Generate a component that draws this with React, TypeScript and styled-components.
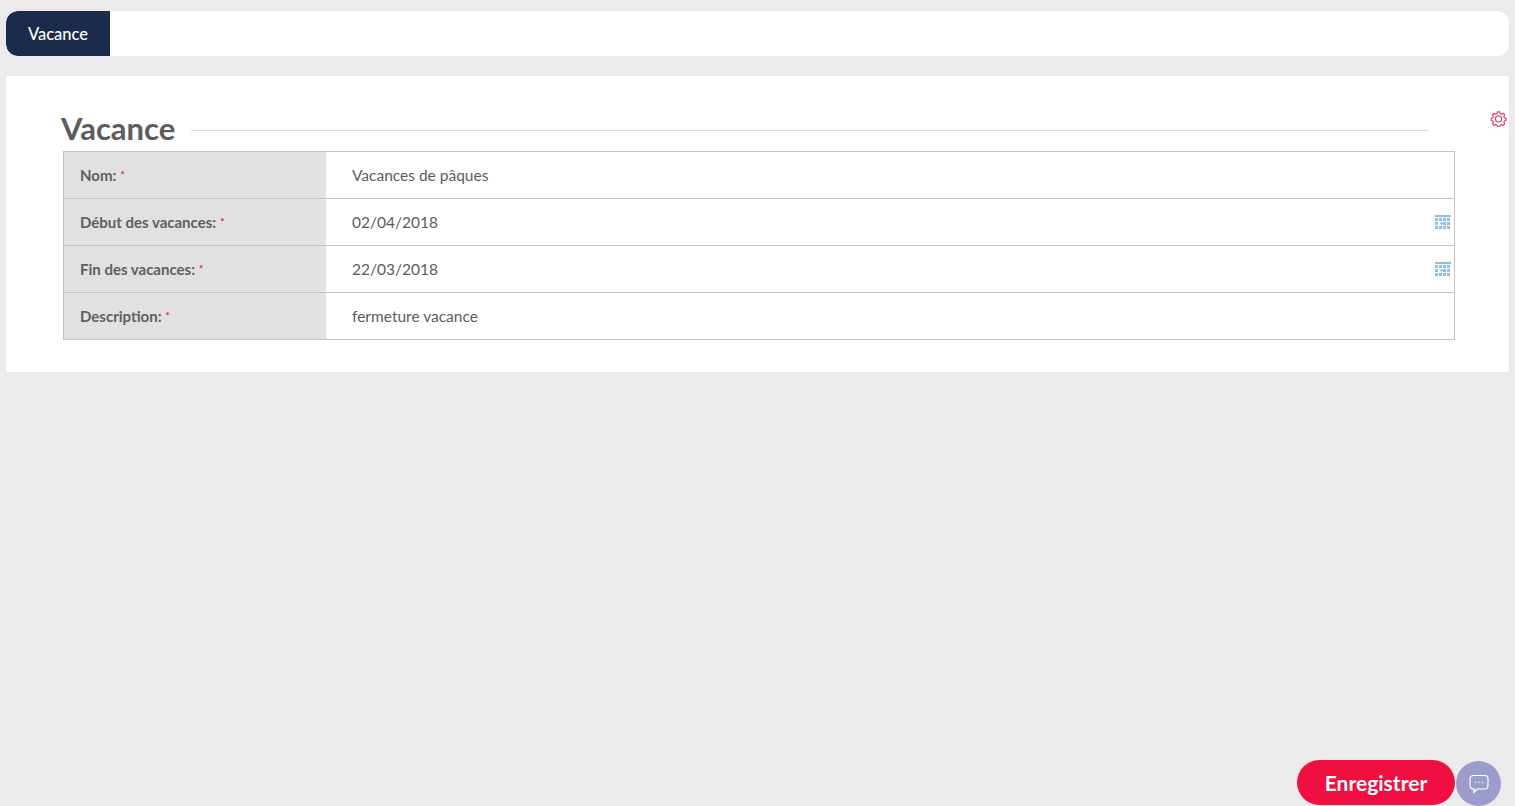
import React from 'react';
import styled, { createGlobalStyle } from 'styled-components';

const GlobalStyle = createGlobalStyle`
	html, body {
		margin: 0;
		padding: 0;
		height: 100%;
		background: #ebebeb;
		font-family: Lato, 'Open Sans', sans-serif;
		color: #5b5b5b;
	}
`;

const Page = styled.div`
	box-sizing: border-box;
	height: 806px;
	padding: 11px 6px 0;
	overflow: hidden;
`;

const TabBar = styled.div`
	display: flex;
	height: 45px;
	background: #fff;
	border-radius: 12px;
	overflow: hidden;
`;

const Tab = styled.div`
	display: flex;
	align-items: center;
	justify-content: center;
	width: 104px;
	background: #1a2b4c;
	color: #fff;
	font-size: 16.5px;
	font-weight: 500;
	border-radius: 12px 0 0 12px;
`;

const Card = styled.section`
	position: relative;
	box-sizing: border-box;
	height: 296px;
	margin-top: 20px;
	padding: 28px 54px 0 57px;
	background: #fff;
`;

const TitleRow = styled.div`
	display: flex;
	align-items: center;
	height: 47px;
	margin-left: -2px;
	padding-right: 27px;
	gap: 16px;
`;

const Title = styled.h2`
	margin: 0;
	font-size: 31px;
	line-height: 40px;
	font-weight: 700;
	color: #5d5d5f;
`;

const TitleLine = styled.div`
	flex: 1;
	height: 1px;
	margin-top: 5px;
	background: #d8d8d8;
`;

const GearButton = styled.div`
	position: absolute;
	top: 34px;
	right: 2px;
	width: 17px;
	height: 17px;
	color: #dc3a62;
`;

const Table = styled.div`
	border: 1px solid #c4c4c4;
	border-bottom-width: 1px;
`;

const Row = styled.div`
	display: grid;
	grid-template-columns: 262px 1fr;
	height: 47px;
	box-sizing: border-box;
	border-top: 1px solid #c4c4c4;

	&:first-child {
		height: 46px;
		border-top: none;
	}
`;

const Label = styled.div`
	display: flex;
	align-items: center;
	padding-left: 16px;
	background: #e1e1e1;
	font-size: 15px;
	font-weight: 700;
	color: #5f5f5f;
`;

const Required = styled.sup`
	margin-left: 4px;
	color: #e8173f;
	font-size: 10px;
	line-height: 0;
	position: relative;
	top: -1px;
`;

const Value = styled.div`
	position: relative;
	display: flex;
	align-items: center;
	padding-left: 26px;
	font-size: 15.5px;
	color: #5c5c5c;
`;

const CalendarButton = styled.svg`
	position: absolute;
	top: 16px;
	right: 3px;
	width: 16px;
	height: 14px;
	fill: #8fc0e4;
`;

const SaveButton = styled.button`
	position: fixed;
	left: 1297px;
	bottom: 1px;
	width: 158px;
	height: 45px;
	border: none;
	border-radius: 23px;
	background: #ef0f41;
	color: #fff;
	font-family: Lato, sans-serif;
	font-size: 21px;
	font-weight: 700;
	padding: 0;
`;

const ChatButton = styled.div`
	position: fixed;
	left: 1456px;
	bottom: 0;
	display: flex;
	align-items: center;
	justify-content: center;
	width: 45px;
	height: 45px;
	border-radius: 50%;
	background: #9c9ccc;
`;

const CalendarIcon = () => (
	<CalendarButton viewBox="0 0 16 14">
		<rect x="0" y="0" width="16" height="2" />
		{[3, 7, 11].map((y) =>
			[0, 4, 8, 12].map((x) =>
				x === 4 && y === 7 ? null : <rect key={`${x}-${y}`} x={x + (x > 0 ? 0 : 0)} y={y} width="3" height="3" />,
			),
		)}
		<path d="M5 8h3v1H5zM6 7h1v3H6z" />
	</CalendarButton>
);

const GearIcon = () => (
	<svg viewBox="0 0 24 24" width="17" height="17" fill="none" stroke="currentColor" strokeWidth="1.6" strokeLinejoin="round">
		<path d="M12 2.5l1.8.2.7 2.5 1.7.7 2.3-1.3 2.3 2.3-1.3 2.3.7 1.7 2.5.7v3.2l-2.5.7-.7 1.7 1.3 2.3-2.3 2.3-2.3-1.3-1.7.7-.7 2.5H10.5l-.7-2.5-1.7-.7-2.3 1.3-2.3-2.3 1.3-2.3-.7-1.7-2.5-.7v-3.2l2.5-.7.7-1.7-1.3-2.3 2.3-2.3 2.3 1.3 1.7-.7.7-2.5z" />
		<circle cx="12" cy="12.5" r="4.4" />
	</svg>
);

const ChatIcon = () => (
	<svg viewBox="0 0 22 22" width="22" height="22" fill="none" stroke="#fff" strokeWidth="1.2" strokeLinejoin="round">
		<path d="M5.5 2.5h11a3.5 3.5 0 0 1 3.5 3.5v6.5a3.5 3.5 0 0 1-3.5 3.5H9l-3.2 3.5.3-3.5h-.6A3.5 3.5 0 0 1 2 12.500V6a3.500 3.500 0 0 1 3.500-3.500z" />
		<circle cx="7.500" cy="9.300" r=".7" fill="#fff" stroke="none" />
		<circle cx="11" cy="9.300" r=".7" fill="#fff" stroke="none" />
		<circle cx="14.500" cy="9.300" r=".7" fill="#fff" stroke="none" />
	</svg>
);

const fields = [
	{ label: 'Nom:', value: 'Vacances de pâques', date: false },
	{ label: 'Début des vacances:', value: '02/04/2018', date: true },
	{ label: 'Fin des vacances:', value: '22/03/2018', date: true },
	{ label: 'Description:', value: 'fermeture vacance', date: false },
];

const App = () => (
	<>
		<GlobalStyle />
		<Page>
			<TabBar>
				<Tab>Vacance</Tab>
			</TabBar>
			<Card>
				<TitleRow>
					<Title>Vacance</Title>
					<TitleLine />
				</TitleRow>
				<GearButton>
					<GearIcon />
				</GearButton>
				<Table>
					{fields.map((f) => (
						<Row key={f.label}>
							<Label>
								{f.label}
								<Required>*</Required>
							</Label>
							<Value>
								{f.value}
								{f.date && <CalendarIcon />}
							</Value>
						</Row>
					))}
				</Table>
			</Card>
			<SaveButton>Enregistrer</SaveButton>
			<ChatButton>
				<ChatIcon />
			</ChatButton>
		</Page>
	</>
);

export default App;
